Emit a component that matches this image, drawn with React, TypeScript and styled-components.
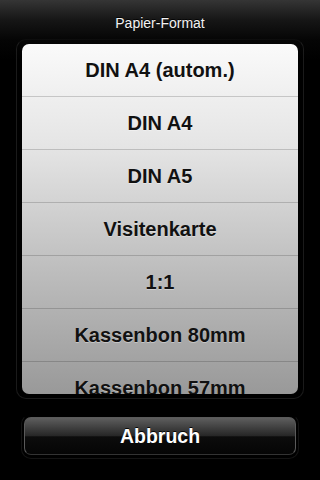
import styled, { createGlobalStyle } from 'styled-components'

const GlobalStyle = createGlobalStyle`
  html, body {
    margin: 0;
    padding: 0;
    background: #000;
  }
  body {
    font-family: "Liberation Sans", Arial, sans-serif;
  }
`

const Screen = styled.div`
  display: flex;
  flex-direction: column;
  width: 320px;
  height: 480px;
  overflow: hidden;
  background: linear-gradient(#353535 0px, #161616 20px, #050505 40px, #000 60px);
`

const Title = styled.div`
  height: 39px;
  display: flex;
  align-items: center;
  justify-content: center;
  padding-top: 6px;
  box-sizing: border-box;

  color: #f2f2f2;
  font-size: 14px;
  text-shadow: 0 -1px 0 rgba(0, 0, 0, 0.8);
`

const Frame = styled.div`
  margin: 0 16px;
  padding: 4px 5px;
  border: 1px solid rgba(255, 255, 255, 0.1);
  border-top-color: rgba(255, 255, 255, 0.03);
  border-radius: 10px;
`

const List = styled.div`
  height: 350px;
  overflow: hidden;
  border-radius: 7px;
  background: linear-gradient(#fafafa 0%, #e4e4e4 30%, #bdbdbd 65%, #999 100%);
`

const Row = styled.div`
  height: 52px;
  display: flex;
  align-items: center;
  justify-content: center;
  border-bottom: 1px solid rgba(0, 0, 0, 0.17);

  color: #111;
  font-size: 20px;
  font-weight: bold;
  text-shadow: 0 1px 0 rgba(255, 255, 255, 0.35);
`

const ButtonWell = styled.div`
  margin: 15px 21px 0;
  padding: 2px 2px 3px;
  border: 1px solid rgba(255, 255, 255, 0.08);
  border-top-color: transparent;
  border-radius: 10px;
`

const CancelButton = styled.button`
  width: 100%;
  height: 38px;
  display: flex;
  align-items: center;
  justify-content: center;
  border: 1px solid #5a5a5a;
  border-bottom-color: #333;
  border-radius: 7px;
  background: linear-gradient(
    #5e5e5e 0%,
    #3c3c3c 30%,
    #262626 50%,
    #0c0c0c 52%,
    #050505 100%
  );

  color: #fff;
  font-family: "Liberation Sans", Arial, sans-serif;
  font-size: 19.5px;
  font-weight: bold;
  text-shadow: 0 -1px 0 rgba(0, 0, 0, 0.9);
`

const formats = [
  'DIN A4 (autom.)',
  'DIN A4',
  'DIN A5',
  'Visitenkarte',
  '1:1',
  'Kassenbon 80mm',
  'Kassenbon 57mm',
]

const App = () => (
  <>
    <GlobalStyle />
    <Screen>
      <Title>Papier-Format</Title>
      <Frame>
        <List>
          {formats.map((format) => (
            <Row key={format}>{format}</Row>
          ))}
        </List>
      </Frame>
      <ButtonWell>
        <CancelButton>Abbruch</CancelButton>
      </ButtonWell>
    </Screen>
  </>
)

export default App
